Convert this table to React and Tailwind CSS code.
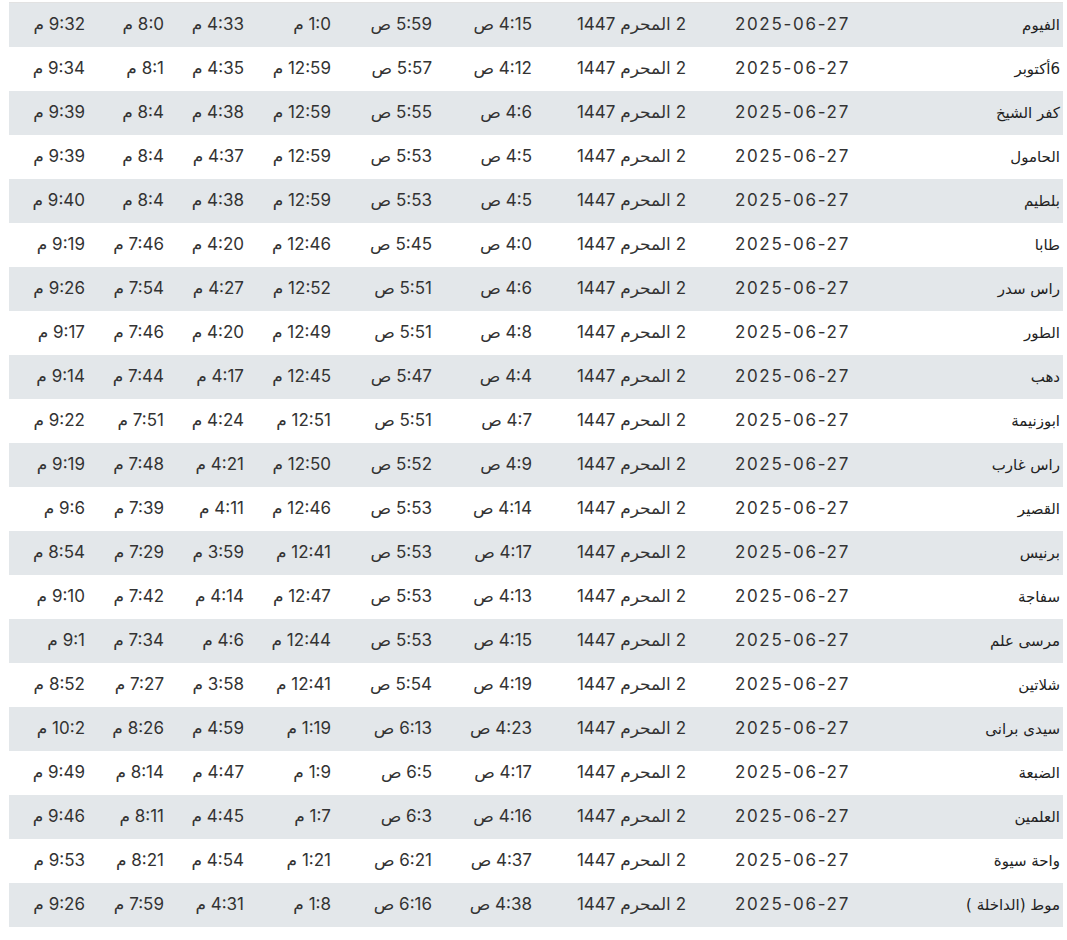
import React from 'react';

const rows = [
  ['الفيوم', '4:15 ص', '5:59 ص', '1:0 م', '4:33 م', '8:0 م', '9:32 م'],
  ['6أكتوبر', '4:12 ص', '5:57 ص', '12:59 م', '4:35 م', '8:1 م', '9:34 م'],
  ['كفر الشيخ', '4:6 ص', '5:55 ص', '12:59 م', '4:38 م', '8:4 م', '9:39 م'],
  ['الحامول', '4:5 ص', '5:53 ص', '12:59 م', '4:37 م', '8:4 م', '9:39 م'],
  ['بلطيم', '4:5 ص', '5:53 ص', '12:59 م', '4:38 م', '8:4 م', '9:40 م'],
  ['طابا', '4:0 ص', '5:45 ص', '12:46 م', '4:20 م', '7:46 م', '9:19 م'],
  ['راس سدر', '4:6 ص', '5:51 ص', '12:52 م', '4:27 م', '7:54 م', '9:26 م'],
  ['الطور', '4:8 ص', '5:51 ص', '12:49 م', '4:20 م', '7:46 م', '9:17 م'],
  ['دهب', '4:4 ص', '5:47 ص', '12:45 م', '4:17 م', '7:44 م', '9:14 م'],
  ['ابوزنيمة', '4:7 ص', '5:51 ص', '12:51 م', '4:24 م', '7:51 م', '9:22 م'],
  ['راس غارب', '4:9 ص', '5:52 ص', '12:50 م', '4:21 م', '7:48 م', '9:19 م'],
  ['القصير', '4:14 ص', '5:53 ص', '12:46 م', '4:11 م', '7:39 م', '9:6 م'],
  ['برنيس', '4:17 ص', '5:53 ص', '12:41 م', '3:59 م', '7:29 م', '8:54 م'],
  ['سفاجة', '4:13 ص', '5:53 ص', '12:47 م', '4:14 م', '7:42 م', '9:10 م'],
  ['مرسى علم', '4:15 ص', '5:53 ص', '12:44 م', '4:6 م', '7:34 م', '9:1 م'],
  ['شلاتين', '4:19 ص', '5:54 ص', '12:41 م', '3:58 م', '7:27 م', '8:52 م'],
  ['سيدى برانى', '4:23 ص', '6:13 ص', '1:19 م', '4:59 م', '8:26 م', '10:2 م'],
  ['الضبعة', '4:17 ص', '6:5 ص', '1:9 م', '4:47 م', '8:14 م', '9:49 م'],
  ['العلمين', '4:16 ص', '6:3 ص', '1:7 م', '4:45 م', '8:11 م', '9:46 م'],
  ['واحة سيوة', '4:37 ص', '6:21 ص', '1:21 م', '4:54 م', '8:21 م', '9:53 م'],
  ['موط (الداخلة )', '4:38 ص', '6:16 ص', '1:8 م', '4:31 م', '7:59 م', '9:26 م'],
];

const App = () => {
  return (
    <div className="bg-white min-h-[940px] pt-[2px] pl-[9px] pr-[4px]">
      <div
        dir="rtl"
        className="border-t border-[#e2e2e2] text-[#333] text-[17px]"
        style={{ fontFamily: 'Inter, "DejaVu Sans", sans-serif' }}
      >
        {rows.map((r, i) => (
          <div
            key={i}
            className={`grid grid-cols-[212px_162px_154px_100px_101px_87px_80px_79px_79px] h-[44px] items-center ${
              i % 2 === 0 ? 'bg-[#e3e7ea]' : 'bg-white'
            }`}
          >
            <div
              className="pr-[3px] text-[15px] text-[#222]"
              style={{ fontFamily: '"DejaVu Sans", sans-serif' }}
            >
              {r[0]}
            </div>
            <div className="pl-[0px] pr-[1px] tracking-[1.7px]">2025-06-27</div>
            <div className="pr-[3px]">2 المحرم 1447</div>
            {r.slice(1).map((t, j) => (
              <div key={j} className="pr-[3px] whitespace-nowrap">
                {t}
              </div>
            ))}
          </div>
        ))}
      </div>
    </div>
  );
};

export default App;
